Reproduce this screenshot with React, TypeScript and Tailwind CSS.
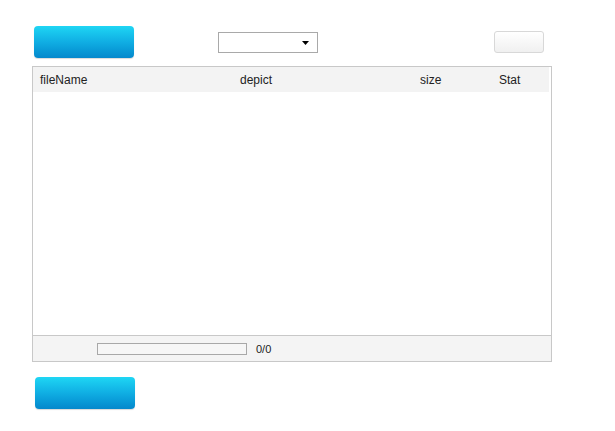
import React from 'react';

const BlueButton = ({ className = '' }: { className?: string }) => (
  <button
    className={`h-[32px] w-[100px] rounded-[4px] bg-gradient-to-b from-[#1fd6f4] via-[#10aee3] to-[#0588cc] shadow-[0_1px_1px_rgba(0,0,0,0.15)] ${className}`}
  />
);

const App = () => {
  return (
    <div className="w-[615px] h-[431px] bg-white font-['Liberation_Sans',Arial,sans-serif] text-[12px] text-[#222]">
      {/* Toolbar */}
      <div className="flex items-start pt-[26px] pl-[34px]">
        <BlueButton />
        <div className="ml-[84px] mt-[6px] flex h-[21px] w-[100px] items-center justify-end border border-[#a9a9a9] bg-white pr-[8px]">
          <svg width="7" height="4" viewBox="0 0 7 4">
            <path d="M0 0h7L3.5 4z" fill="#000" />
          </svg>
        </div>
        <button className="ml-[176px] mt-[5px] h-[22px] w-[50px] rounded-[3px] border border-[#d8d8d8] bg-gradient-to-b from-white to-[#f0f0f0]" />
      </div>

      {/* Table */}
      <div className="ml-[32px] mt-[8px] flex h-[296px] w-[520px] flex-col border border-[#c8c8c8]">
        <div className="mr-[2px] flex h-[25px] items-center bg-[#f3f3f3]">
          <div className="w-[207px] pl-[7px]">fileName</div>
          <div className="w-[172px]">depict</div>
          <div className="w-[80px] pl-[8px]">size</div>
          <div className="pl-[7px]">Stat</div>
        </div>
        <div className="flex-1" />
        <div className="flex h-[26px] items-center border-t border-[#c8c8c8] bg-[#f4f4f4] pl-[64px]">
          <div className="h-[12px] w-[150px] border border-[#a8a8a8] bg-[#f6f6f6]" />
          <span className="ml-[9px] mt-[2px] text-[11px]">0/0</span>
        </div>
      </div>

      {/* Bottom button */}
      <div className="pl-[35px] pt-[15px]">
        <BlueButton />
      </div>
    </div>
  );
};

export default App;
